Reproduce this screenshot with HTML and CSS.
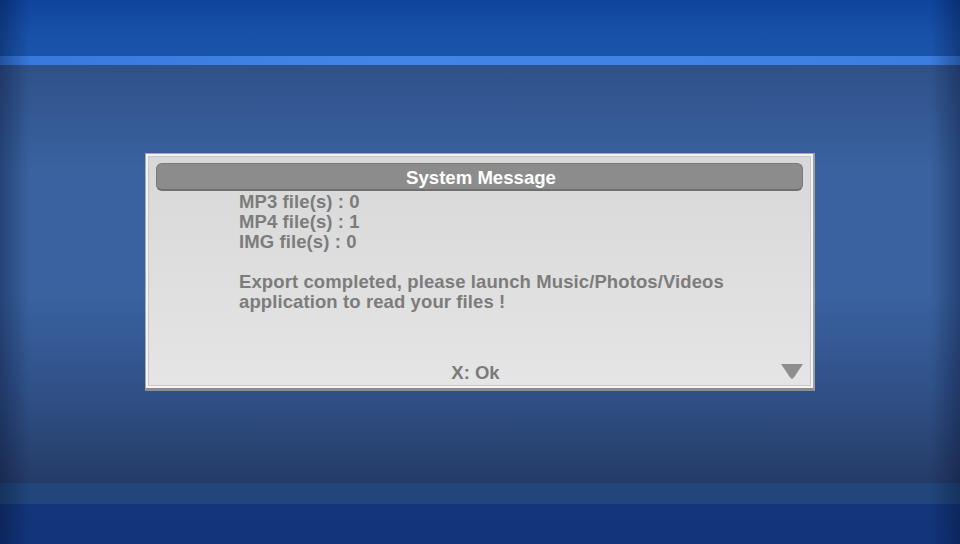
FILE: index.html
```html
<!DOCTYPE html>
<html>
<head>
<meta charset="utf-8">
<link rel="stylesheet" href="styles.css">
</head>
<body>
<div class="screen">
  <div class="top-band"></div>
  <div class="top-stripe"></div>
  <div class="main">
    <div class="dialog">
      <div class="dialog-inner">
        <div class="title">System Message</div>
        <div class="body">
          <p>MP3 file(s) : 0</p>
          <p>MP4 file(s) : 1</p>
          <p>IMG file(s) : 0</p>
          <p class="gap">Export completed, please launch Music/Photos/Videos</p>
          <p>application to read your files !</p>
        </div>
        <div class="footer">
          <span class="ok">X: Ok</span>
          <svg class="arrow" width="24" height="18" viewBox="0 0 24 18"><path d="M1 2 H23 L13.5 16 Q12 17.5 10.5 16 Z" fill="#8e8e8e"/></svg>
        </div>
      </div>
    </div>
  </div>
  <div class="bottom-stripe"></div>
  <div class="bottom-band"></div>
</div>
</body>
</html>
```
FILE: styles.css
```css
html, body {
  margin: 0;
  padding: 0;
  width: 960px;
  height: 544px;
  overflow: hidden;
}
.screen {
  width: 960px;
  height: 544px;
  display: flex;
  flex-direction: column;
  position: relative;
  font-family: "Liberation Sans", Arial, sans-serif;
}
.screen::after {
  content: "";
  position: absolute;
  inset: 0;
  pointer-events: none;
  background: linear-gradient(90deg, rgba(0,10,40,0.35) 0, rgba(0,10,40,0) 30px, rgba(0,10,40,0) 930px, rgba(0,10,40,0.35) 960px);
}
.top-band {
  height: 56px;
  background: linear-gradient(180deg, #0f439c 0%, #1851a8 60%, #1b55ab 100%);
}
.top-stripe {
  height: 9px;
  background: linear-gradient(90deg, #3778dc 0%, #4186e6 40%, #3f84e4 70%, #3a7ddf 100%);
}
.main {
  height: 418px;
  background: linear-gradient(180deg, #2f5189 0%, #3a62a0 25%, #3a62a0 55%, #2f4f85 80%, #253b66 100%);
  display: flex;
  flex-direction: column;
  align-items: center;
  padding-top: 88px;
  box-sizing: border-box;
}
.bottom-stripe {
  height: 21px;
  background: #21467b;
}
.bottom-band {
  height: 40px;
  background: linear-gradient(180deg, #143579 0%, #12347a 100%);
}
.dialog {
  width: 670px;
  height: 238px;
  box-sizing: border-box;
  border: 1px solid #a9a9a9;
  border-bottom: 3px solid #8d8d8d;
  border-right: 2px solid #a0a0a0;
  background: #f4f4f4;
  padding: 2px;
}
.dialog-inner {
  height: 100%;
  box-sizing: border-box;
  background: linear-gradient(180deg, #d8d8d8 0%, #dddddd 40%, #e5e5e5 100%);
  border: 1px solid #c8c8c8;
  padding: 6px 6px 0 6px;
  display: flex;
  flex-direction: column;
}
.title {
  height: 28px;
  box-sizing: border-box;
  background: #8c8c8c;
  border: 1px solid #7a7a7a;
  border-bottom: 2px solid #6f6f6f;
  border-radius: 6px;
  color: #ffffff;
  font-weight: bold;
  font-size: 18.6px;
  text-align: center;
  line-height: 27px;
  margin: 0 1px 0 1px;
  padding-left: 3px;
}
.body {
  padding-left: 84px;
  color: #7c7c7c;
  font-weight: bold;
  font-size: 18.5px;
  letter-spacing: 0.1px;
  line-height: 20px;
  margin-top: 1px;
}
.body p {
  margin: 0;
}
.body .gap {
  margin-top: 20px;
}
.footer {
  margin-top: auto;
  height: 36px;
  display: flex;
  align-items: center;
  justify-content: center;
  position: relative;
}
.ok {
  color: #7a7a7a;
  font-weight: bold;
  font-size: 18.5px;
  margin-top: 12px;
  margin-left: -8px;
}
.arrow {
  position: absolute;
  right: 0;
  top: 13px;
}
```
